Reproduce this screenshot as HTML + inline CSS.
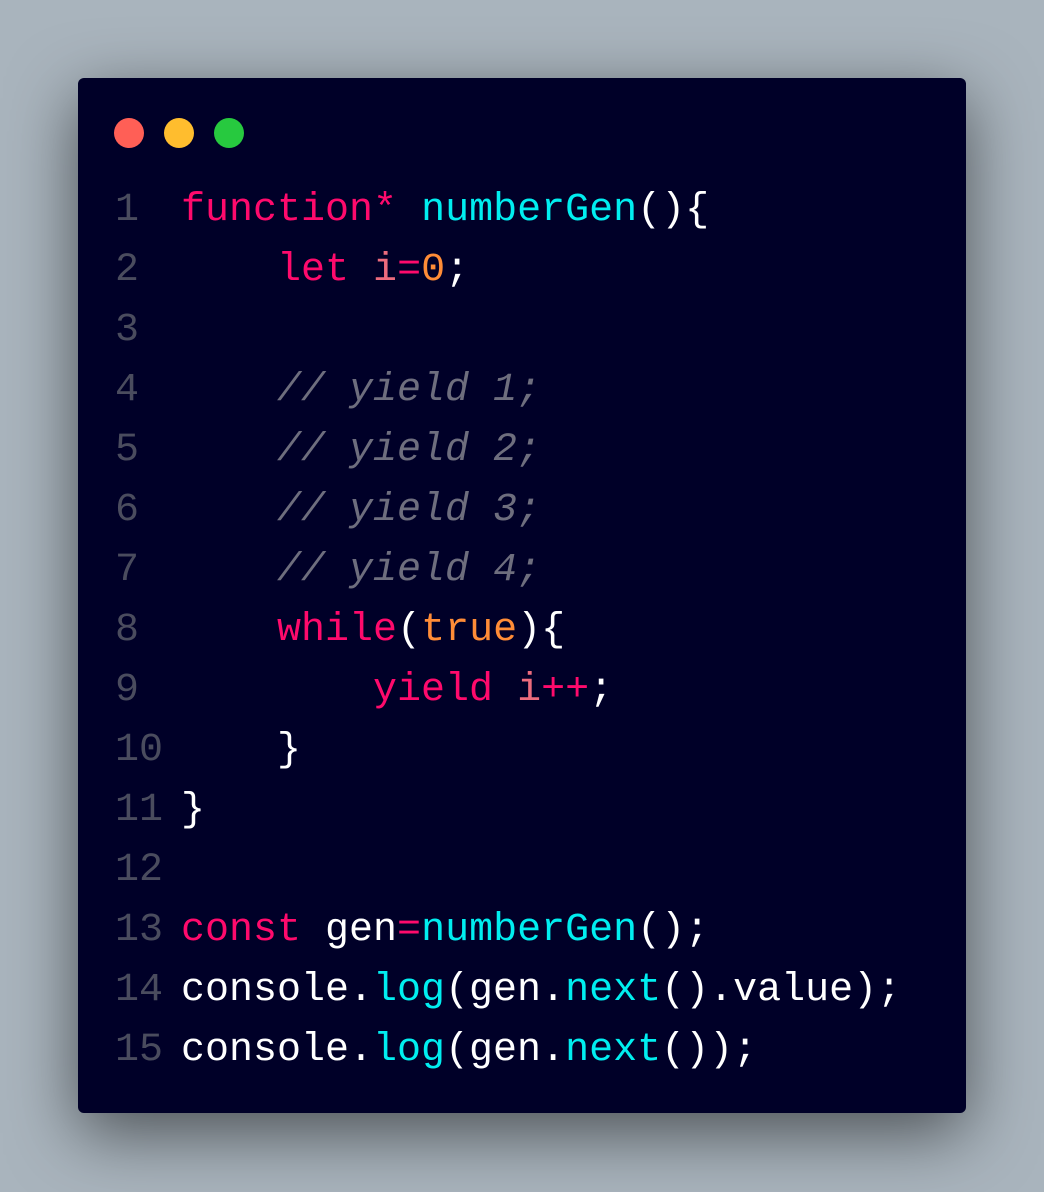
<!DOCTYPE html>
<html><head><style>
html,body{margin:0;padding:0}
body{width:1044px;height:1192px;background:#a9b4bd;position:relative;overflow:hidden;font-family:"Liberation Mono",monospace}
.win{position:absolute;left:78px;top:78px;width:888px;height:1035px;background:#000028;border-radius:6px;box-shadow:0 20px 68px rgba(0,0,0,0.55)}
.dot{position:absolute;top:40px;width:30px;height:30px;border-radius:50%}
.code{position:absolute;left:37px;top:103px;font-size:40px;line-height:60px;color:#fff;white-space:pre}
.ln{display:inline-block;width:66px;color:#4a4c5e}
.k{color:#ff0a6c}.f{color:#00eef0}.o{color:#ff8c37}.v{color:#ec6b7d}.c{color:#6e6e7e;font-style:italic}
</style></head><body>
<div class="win">
<div class="dot" style="left:36px;background:#ff5f56"></div>
<div class="dot" style="left:86px;background:#ffbd2e"></div>
<div class="dot" style="left:136px;background:#27c93f"></div>
<div class="code"><span class="ln">1</span><span class="k">function*</span> <span class="f">numberGen</span>(){
<span class="ln">2</span>    <span class="k">let</span> <span class="v">i</span><span class="k">=</span><span class="o">0</span>;
<span class="ln">3</span>
<span class="ln">4</span>    <span class="c">// yield 1;</span>
<span class="ln">5</span>    <span class="c">// yield 2;</span>
<span class="ln">6</span>    <span class="c">// yield 3;</span>
<span class="ln">7</span>    <span class="c">// yield 4;</span>
<span class="ln">8</span>    <span class="k">while</span>(<span class="o">true</span>){
<span class="ln">9</span>        <span class="k">yield</span> <span class="v">i</span><span class="k">++</span>;
<span class="ln">10</span>    }
<span class="ln">11</span>}
<span class="ln">12</span>
<span class="ln">13</span><span class="k">const</span> gen<span class="k">=</span><span class="f">numberGen</span>();
<span class="ln">14</span>console.<span class="f">log</span>(gen.<span class="f">next</span>().value);
<span class="ln">15</span>console.<span class="f">log</span>(gen.<span class="f">next</span>());</div>
</div>
</body></html>
